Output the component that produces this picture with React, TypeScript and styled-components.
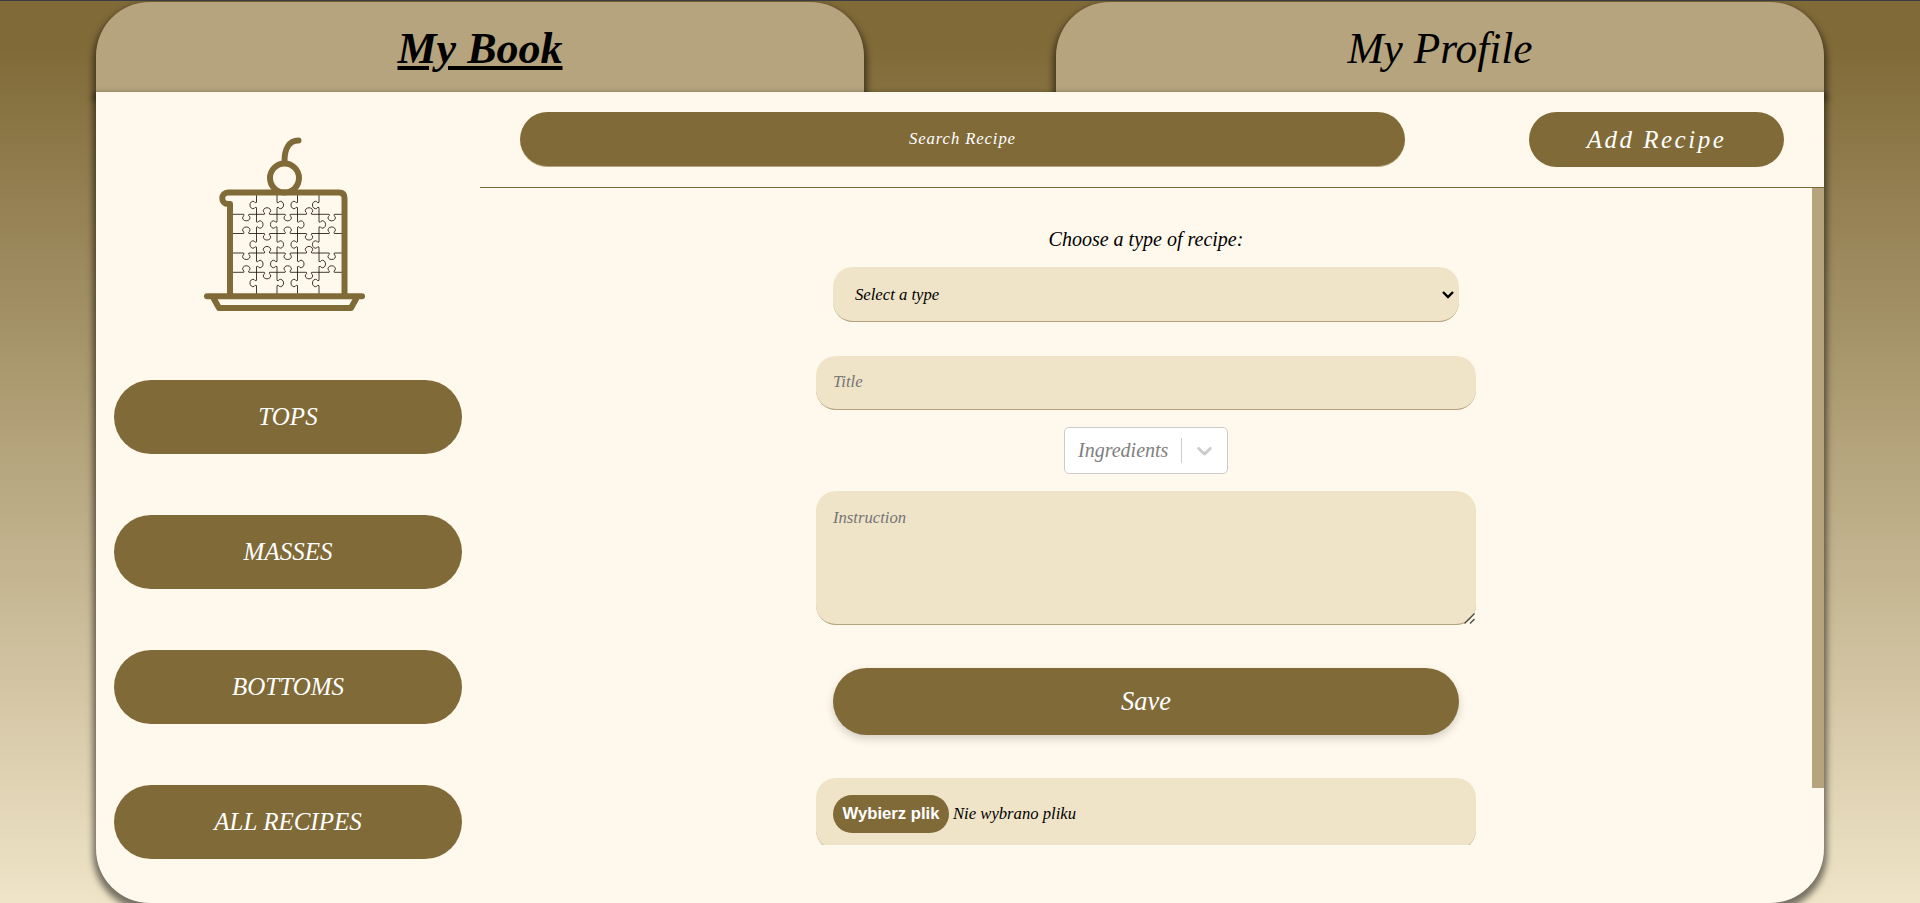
import React from "react";
import styled, { createGlobalStyle, css } from "styled-components";

const brown = "#806a38";
const tan = "#b5a47d";
const sand = "#efe4c8";
const cream = "#fff8ec";
const serif = '"Liberation Serif", "Times New Roman", serif';
const bookShadow = "0 5px 6px 3px rgba(0, 0, 0, 0.5)";

const GlobalStyle = createGlobalStyle`
  *, *::before, *::after { box-sizing: border-box; }
  body { margin: 0; overflow: hidden; font-family: ${serif}; font-style: italic; }
  button, input, select, textarea { font: inherit; }
`;

const Page = styled.div`
  height: 903px;
  display: flex;
  flex-direction: column;
  align-items: center;
  overflow: hidden;
  padding-top: 1px;
  border-top: 1px solid #3a3d46;
  background: linear-gradient(${brown} 0%, ${brown} 5%, ${sand} 100%);
`;

const Tabs = styled.nav`
  width: 1728px;
  height: 90px;
  flex: none;
  display: flex;
  justify-content: space-between;
`;

const Tab = styled.a<{ $active?: boolean }>`
  width: 768px;
  display: flex;
  align-items: center;
  justify-content: center;
  padding-top: 2px;
  border-radius: 54px 54px 0 0;
  background: ${tan};
  box-shadow: ${bookShadow};
  color: #000;
  font-size: 43.4px;
  ${(p) =>
    p.$active &&
    css`
      font-size: 44px;
      font-weight: bold;
      text-decoration: underline;
      text-decoration-thickness: 4px;
      text-underline-offset: 3px;
    `}
`;

const Book = styled.main`
  position: relative;
  width: 1728px;
  height: 811px;
  flex: none;
  display: flex;
  border-radius: 0 0 54px 54px;
  background: ${cream};
  box-shadow: ${bookShadow};
`;

const Sidebar = styled.aside`
  width: 384px;
  display: flex;
  flex-direction: column;
  align-items: center;
`;

const Logo = styled.svg`
  width: 190px;
  height: 200px;
  margin: 33px 6px 55px 0;
  flex: none;
`;

const Categories = styled.div`
  display: flex;
  flex-direction: column;
  gap: 61px;
`;

const Pill = styled.button`
  border: 0;
  padding: 0;
  border-radius: 40px;
  background: ${brown};
  color: #fff;
  font-size: 25px;
`;

const CategoryButton = styled(Pill)`
  width: 348px;
  height: 74px;
`;

const Content = styled.section`
  width: 1344px;
  display: flex;
  flex-direction: column;
`;

const Toolbar = styled.header`
  height: 96px;
  flex: none;
  display: flex;
  justify-content: space-between;
  padding: 20px 40px 0;
  border-bottom: 1px solid ${brown};
`;

const Search = styled.input`
  width: 885px;
  height: 55px;
  border: 0;
  border-bottom: 1px solid ${tan};
  border-radius: 30px;
  background: ${brown};
  text-align: center;
  font-size: 16.67px;
  letter-spacing: 0.9px;
  &::placeholder { color: #fff; opacity: 1; }
`;

const AddButton = styled(Pill)`
  width: 255px;
  height: 55px;
  border-radius: 30px;
  letter-spacing: 2.5px;
`;

const Scroller = styled.div`
  height: 657px;
  display: flex;
  overflow: hidden;
`;

const ScrollThumb = styled.div`
  width: 12px;
  height: 600px;
  background: ${tan};
`;

const Form = styled.form`
  flex: 1;
  display: flex;
  flex-direction: column;
  align-items: center;
  padding-top: 39px;
`;

const Label = styled.label`
  font-size: 20px;
  line-height: 24px;
`;

const field = css`
  flex: none;
  border: 0;
  border-bottom: 1px solid ${tan};
  border-radius: 20px;
  background: ${sand};
  font-size: 16.67px;
  color: #000;
  &::placeholder { color: #757575; opacity: 1; }
`;

const SelectWrap = styled.div`
  position: relative;
  display: flex;
  margin-top: 16px;
`;

const TypeSelect = styled.select`
  ${field}
  appearance: none;
  width: 626px;
  height: 55px;
  padding: 0 22px;
`;

const SelectArrow = styled.svg`
  position: absolute;
  right: 5px;
  top: 23px;
  pointer-events: none;
`;

const TitleInput = styled.input`
  ${field}
  width: 660px;
  height: 54px;
  margin-top: 34px;
  padding: 0 17px 2px;
`;

const Ingredients = styled.div`
  width: 164px;
  height: 47px;
  flex: none;
  margin-top: 17px;
  display: flex;
  align-items: center;
  border: 1px solid #ccc;
  border-radius: 5px;
  background: #fff;
  color: #808080;
  font-size: 20px;
`;

const IngredientsText = styled.span`
  width: 116px;
  padding-left: 13px;
`;

const Divider = styled.span`
  width: 1px;
  height: 25px;
  margin-right: 10px;
  background: #ccc;
`;

const InstructionWrap = styled.div`
  position: relative;
  display: flex;
  margin-top: 17px;
`;

const Instruction = styled.textarea`
  ${field}
  width: 660px;
  height: 134px;
  padding: 17px;
  resize: none;
`;

const ResizeGrip = styled.svg`
  position: absolute;
  right: 1px;
  bottom: 1px;
`;

const SaveButton = styled(Pill)`
  width: 626px;
  height: 67px;
  flex: none;
  margin-top: 43px;
  box-shadow: 0 4px 8px rgba(0, 0, 0, 0.17);
  font-size: 26.4px;
`;

const FileField = styled.div`
  ${field}
  width: 660px;
  height: 72px;
  margin-top: 43px;
  padding: 17px;
  display: flex;
  align-items: flex-start;
  gap: 4px;
  line-height: 38px;
`;

const FileButton = styled(Pill)`
  width: 116px;
  height: 38px;
  border-radius: 20px;
  font: bold 16.67px "Liberation Sans", Arial, sans-serif;
`;

// Puzzle seams: each row or column alternates the side its knobs point to.
const rowKnobs = [56.3, 77, 97.7, 119, 141.7];
const columnKnobs = [80, 99.5, 119.5, 139, 158];

const rowSeam = (y: number, first: number) => {
  const knobs = rowKnobs.map((x, i) => {
    const s = i % 2 ? -first : first;
    return `H${x - 2.6} q1 ${s * 1.4} -0.7 ${s * 2.2} A3.7 3 0 1 ${s > 0 ? 0 : 1} ${x + 3.3} ${y + s * 2.2} q-1.700 ${-s * 0.8} -0.700 ${-s * 2.2}`;
  });
  return `M42 ${y} ${knobs.join(" ")} H152`;
};

const columnSeam = (x: number, first: number) => {
  const knobs = columnKnobs.map((y, i) => {
    const s = i % 2 ? -first : first;
    return `V${y - 2.6} q${s * 1.4} 1 ${s * 2.2} -0.7 A3 3.700 0 1 ${s > 0 ? 1 : 0} ${x + s * 2.2} ${y + 3.3} q${-s * 0.8} -1.700 ${-s * 2.2} -0.700`;
  });
  return `M${x} 70 ${knobs.join(" ")} V169`;
};

const seams = [
  rowSeam(89.3, 1),
  rowSeam(108.5, -1),
  rowSeam(128, 1),
  rowSeam(147.3, -1),
  columnSeam(66.5, -1),
  columnSeam(87, 1),
  columnSeam(107.5, -1),
  columnSeam(129, -1),
];

const CakeLogo = () => (
  <Logo viewBox="0 0 190 200" fill="none">
    <g stroke="#1c1912" strokeWidth="0.85">
      {seams.map((d) => (
        <path key={d} d={d} />
      ))}
    </g>
    <g stroke={brown} strokeWidth="6" strokeLinecap="round" strokeLinejoin="round">
      <path d="M108.500 15.500 C99 15.500 94.500 24 94.500 36" />
      <circle cx="94.500" cy="53" r="14.500" />
      <path d="M40 169 V79 H38 A5.500 5.500 0 0 1 38 67.500 H149 Q154.500 67.500 154.500 73 V169" />
      <path d="M17 171.300 H172" />
      <path d="M24 174 L29 183 H161 L166 174" />
    </g>
  </Logo>
);

const categories = ["TOPS", "MASSES", "BOTTOMS", "ALL RECIPES"];

export default function App() {
  return (
    <>
      <GlobalStyle />
      <Page>
        <Tabs>
          <Tab $active>My Book</Tab>
          <Tab>My Profile</Tab>
        </Tabs>
        <Book>
          <Sidebar>
            <CakeLogo />
            <Categories>
              {categories.map((name) => (
                <CategoryButton key={name}>{name}</CategoryButton>
              ))}
            </Categories>
          </Sidebar>
          <Content>
            <Toolbar>
              <Search placeholder="Search Recipe" />
              <AddButton>Add Recipe</AddButton>
            </Toolbar>
            <Scroller>
              <Form>
                <Label>Choose a type of recipe:</Label>
                <SelectWrap>
                  <TypeSelect>
                    <option>Select a type</option>
                  </TypeSelect>
                  <SelectArrow width="12" height="10" fill="none" stroke="#000" strokeWidth="2.4">
                    <path d="M1 2 L6 7 L11 2" />
                  </SelectArrow>
                </SelectWrap>
                <TitleInput placeholder="Title" />
                <Ingredients>
                  <IngredientsText>Ingredients</IngredientsText>
                  <Divider />
                  <svg width="25" height="25" viewBox="0 0 20 20" fill="#ccc">
                    <path d="M4.516 7.548c0.436-0.446 1.043-0.481 1.576 0l3.908 3.747 3.908-3.747c0.533-0.481 1.141-0.446 1.574 0 0.436 0.445 0.408 1.197 0 1.615-0.406 0.418-4.695 4.502-4.695 4.502-0.217 0.223-0.502 0.335-0.787 0.335s-0.570-0.112-0.789-0.335c0 0-4.287-4.084-4.695-4.502s-0.436-1.170 0-1.615z" />
                  </svg>
                </Ingredients>
                <InstructionWrap>
                  <Instruction placeholder="Instruction" />
                  <ResizeGrip width="11" height="11" stroke="#4c4a44" strokeWidth="1.4">
                    <path d="M0.500 10.500 L10.500 0.500 M6 10.500 L10.500 6" />
                  </ResizeGrip>
                </InstructionWrap>
                <SaveButton type="button">Save</SaveButton>
                <FileField>
                  <FileButton type="button">Wybierz plik</FileButton>
                  <span>Nie wybrano pliku</span>
                </FileField>
              </Form>
              <ScrollThumb />
            </Scroller>
          </Content>
        </Book>
      </Page>
    </>
  );
}
